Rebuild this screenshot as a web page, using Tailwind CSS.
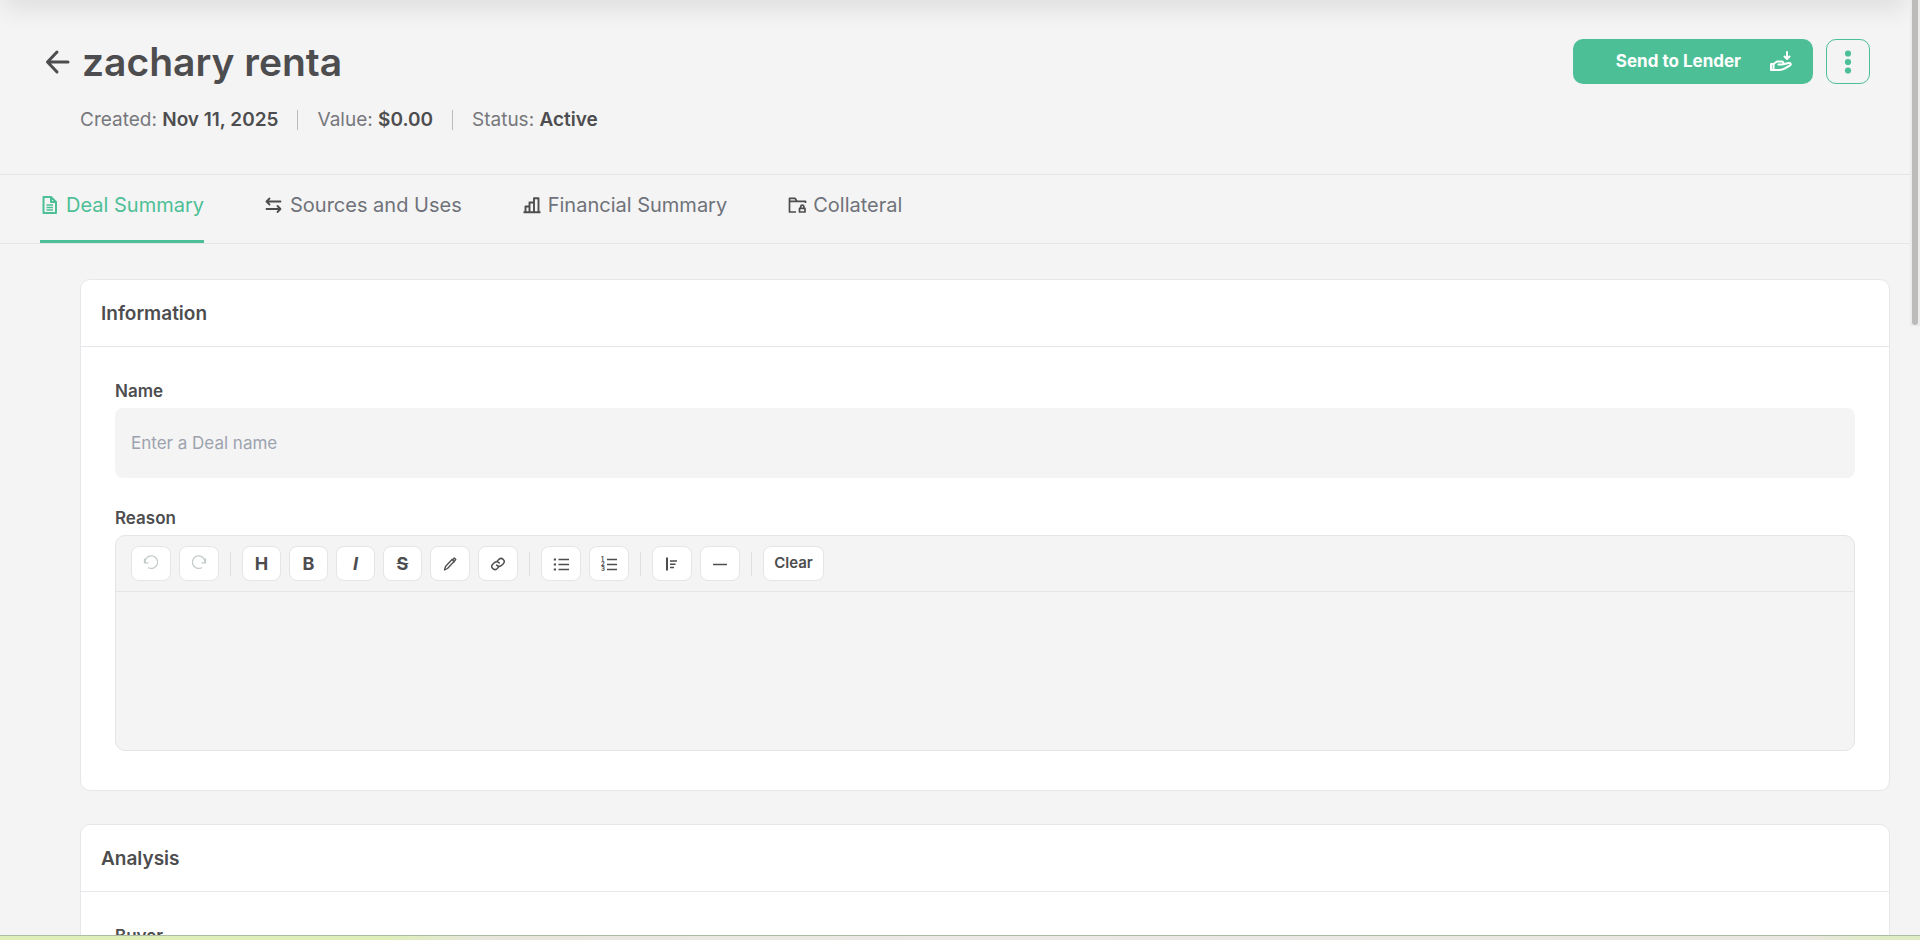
<!DOCTYPE html>
<html lang="en">

<head>
    <meta charset="UTF-8">
    <meta name="viewport" content="width=device-width, initial-scale=1.0">
    <title>zachary renta - Deal Summary</title>
    <script src="https://cdn.jsdelivr.net/npm/@tailwindcss/browser@4"></script>
</head>

<body class="h-screen flex flex-col overflow-hidden bg-[#f4f4f4] font-['Inter',sans-serif] text-[#4d4d4f]">
    <div class="relative flex-1 min-h-0 overflow-hidden pr-[10px]">
        <!-- Shadow of the bar above -->
        <div class="absolute left-2 right-[18px] -top-4 h-4 shadow-[0_4px_24px_4px_rgba(0,0,0,0.1)]"></div>
        <!-- Scroll thumb -->
        <div class="absolute right-0 top-0 w-[10px] h-[326px] bg-[#ebebeb] px-[2px]">
            <div class="h-[325px] bg-[#bcbbba] rounded-b-full"></div>
        </div>

        <!-- Deal header -->
        <header class="flex justify-between items-start h-[175px] pl-11 pr-10 pt-9 border-b border-[#e5e5e5]">
            <div>
                <div class="flex items-center gap-[10px] h-[52px]">
                    <a href="#" aria-label="Back">
                        <svg viewBox="0 0 28 28" fill="none" stroke="currentColor" stroke-width="3"
                            stroke-linecap="round" stroke-linejoin="round" class="w-7 h-7">
                            <path d="M24 14H4M13 4L3.500 14L13 24" />
                        </svg>
                    </a>
                    <h1 class="text-[39px] leading-[52px] font-semibold">zachary renta</h1>
                </div>
                <div class="flex items-center gap-[19px] mt-5 pl-9 text-[19px] leading-6 text-[#77787c]">
                    <p>Created: <b class="font-semibold text-[#4d4d4f]">Nov 11, 2025</b></p>
                    <span class="w-px h-5 bg-[#bcbcbc]"></span>
                    <p>Value: <b class="font-semibold text-[#4d4d4f]">$0.00</b></p>
                    <span class="w-px h-5 bg-[#bcbcbc]"></span>
                    <p>Status: <b class="font-semibold text-[#4d4d4f]">Active</b></p>
                </div>
            </div>
            <div class="flex gap-[13px] pt-[3px]">
                <button class="flex items-center justify-end gap-7 w-[240px] h-[45px] pr-5 rounded-[10px] bg-[#4dbf96] text-white text-[17px] font-bold">
                    Send to Lender
                    <svg viewBox="0 0 24 24" fill="none" stroke="currentColor" stroke-width="2"
                        stroke-linecap="round" stroke-linejoin="round" class="w-6 h-6">
                        <path d="M18 2v7M15.500 6.500l2.500 2.500l2.500-2.500" />
                        <path d="M2 14h2.500v6H2z" />
                        <path d="M4.500 14l3.500-2.500h4.500c2.500 0 2.500 3 0 3H9.500M13.500 14.500l6-1.500c2.500-.4 3 1.600 1.300 2.500C17 18 14 20 10 20H4.500" />
                    </svg>
                </button>
                <button aria-label="More actions" class="flex items-center justify-center w-11 h-[45px] rounded-[10px] border border-[#4dbf96] text-[#4dbf96]">
                    <svg viewBox="0 0 8 24" fill="currentColor" class="w-2 h-6">
                        <circle cx="4" cy="3.500" r="3.100" />
                        <circle cx="4" cy="12" r="3.100" />
                        <circle cx="4" cy="20.500" r="3.100" />
                    </svg>
                </button>
            </div>
        </header>

        <!-- Tabs -->
        <nav class="flex gap-[60px] h-[69px] px-10 border-b border-[#e5e5e5] text-[20px] leading-6 text-[#6f727a]">
            <a href="#" class="flex gap-[6px] pt-[18px] border-b-[3px] border-[#4dbf96] text-[#4dbf96]">
                <svg viewBox="0 0 20 24" fill="none" stroke="currentColor" stroke-width="2" stroke-linejoin="round" class="w-5 h-6">
                    <path d="M3.500 4h7.500l5 5v11H3.500zM11 4v5h5" />
                    <path stroke-width="1.500" d="M6.500 12h6.500M6.500 14.500h6.500M6.500 17h6.500" />
                </svg>
                Deal Summary
            </a>
            <a href="#" class="flex gap-[6px] pt-[18px]">
                <svg viewBox="0 0 20 24" fill="none" stroke="#4d4d4f" stroke-width="1.800" stroke-linecap="round" stroke-linejoin="round" class="w-5 h-6">
                    <path d="M16.500 8.500H3M5.500 5.500l-3 3l3 3M2.500 16H16M13.500 13l3 3l-3 3" />
                </svg>
                Sources and Uses
            </a>
            <a href="#" class="flex gap-[6px] pt-[18px]">
                <svg viewBox="0 0 20 24" fill="none" stroke="#4d4d4f" stroke-width="1.900" stroke-linejoin="round" class="w-5 h-6">
                    <path d="M1.500 19.300h17M3.500 19V13.500H7.500M7.500 19V9.500H12M12 19V5.200h4.500V19" />
                </svg>
                Financial Summary
            </a>
            <a href="#" class="flex gap-[6px] pt-[18px]">
                <svg viewBox="0 0 20 24" fill="none" stroke="#4d4d4f" stroke-width="1.700" stroke-linejoin="round" class="w-5 h-6">
                    <path d="M18.500 10V8.300H10L8 5.300H2.500V19H9M2.500 8.300H10" />
                    <path d="M12.500 15.300h5.500v3.700h-5.500zM13.700 15v-1.300a1.600 1.600 0 0 1 3.200 0V15" />
                </svg>
                Collateral
            </a>
        </nav>

        <!-- Cards -->
        <main class="flex flex-col gap-[33px] pt-[35px] pl-20 pr-5">
            <section class="bg-white border border-[#e5e7eb] rounded-[10px]">
                <h2 class="h-[67px] px-5 border-b border-[#e5e7eb] text-[19px] leading-[67px] font-semibold">Information</h2>
                <div class="px-[34px] pt-8 pb-[39px]">
                    <label for="name" class="block text-[17px] leading-6 font-semibold">Name</label>
                    <input id="name" type="text" placeholder="Enter a Deal name"
                        class="block w-full h-[70px] mt-[5px] px-4 rounded-lg bg-[#f4f4f4] text-[17px] placeholder:text-[#9ca3af]">
                    <label for="reason" class="block mt-7 text-[17px] leading-6 font-semibold">Reason</label>
                    <div class="mt-[5px] border border-[#e5e5e5] rounded-[10px] bg-[#f4f4f4]">
                        <div class="flex items-center gap-2 h-14 px-[15px] border-b border-[#e5e5e5] text-[18px] font-bold">
                            <button aria-label="Undo" disabled class="flex items-center justify-center w-10 h-[35px] bg-white border border-[#e5e5e5] rounded-lg text-[#c3cbcb]">
                                <svg viewBox="0 0 20 20" fill="none" stroke="currentColor" stroke-width="1.300" class="w-5 h-5">
                                    <path d="M4 8.500A6.300 6.300 0 1 1 7 13.500M3.500 4.500v4.300h4" />
                                </svg>
                            </button>
                            <button aria-label="Redo" disabled class="flex items-center justify-center w-10 h-[35px] bg-white border border-[#e5e5e5] rounded-lg text-[#c3cbcb]">
                                <svg viewBox="0 0 20 20" fill="none" stroke="currentColor" stroke-width="1.300" class="w-5 h-5">
                                    <path d="M16 8.500A6.300 6.300 0 1 0 13 13.500M16.500 4.500v4.300h-4" />
                                </svg>
                            </button>
                            <span class="w-px h-6 mx-[3px] bg-[#e0e0e0]"></span>
                            <button class="w-[39px] h-[35px] bg-white border border-[#e5e5e5] rounded-lg">H</button>
                            <button class="w-[39px] h-[35px] bg-white border border-[#e5e5e5] rounded-lg">B</button>
                            <button class="w-[39px] h-[35px] bg-white border border-[#e5e5e5] rounded-lg italic">I</button>
                            <button class="w-[39px] h-[35px] bg-white border border-[#e5e5e5] rounded-lg line-through">S</button>
                            <button aria-label="Highlight" class="flex items-center justify-center w-10 h-[35px] bg-white border border-[#e5e5e5] rounded-lg">
                                <svg viewBox="0 0 16 16" fill="none" stroke="currentColor" stroke-width="1.300" stroke-linejoin="round" class="w-4 h-4">
                                    <path d="M2.500 14l1-3.500L10 3.500l2 2L5.500 12.500zM9.500 3l3.200 3.200M11 3.500l1.300-1.500l1.500 1.500L12.500 5" />
                                </svg>
                            </button>
                            <button aria-label="Link" class="flex items-center justify-center w-10 h-[35px] bg-white border border-[#e5e5e5] rounded-lg">
                                <svg viewBox="0 0 24 24" fill="none" stroke="currentColor" stroke-width="2.200" stroke-linecap="round" class="w-4 h-4">
                                    <path d="M10 13.500a5 5 0 0 0 7.500.5l2.500-2.500a4.600 4.600 0 0 0-6.500-6.500L11 7.500" />
                                    <path d="M14 10.500a5 5 0 0 0-7.500-.5L4 12.500a4.600 4.600 0 0 0 6.500 6.500L13 16.500" />
                                </svg>
                            </button>
                            <span class="w-px h-6 mx-[3px] bg-[#e0e0e0]"></span>
                            <button aria-label="Bullet list" class="flex items-center justify-center w-10 h-[35px] bg-white border border-[#e5e5e5] rounded-lg">
                                <svg viewBox="0 0 16 16" fill="none" stroke="currentColor" stroke-width="1.500" class="w-4 h-4">
                                    <path d="M5.500 3.500H16M5.500 8.500H16M5.500 13.500H16" />
                                    <path stroke-width="2.200" d="M.8 3.500H3M.8 8.500H3M.8 13.500H3" />
                                </svg>
                            </button>
                            <button aria-label="Numbered list" class="flex items-center justify-center w-10 h-[35px] bg-white border border-[#e5e5e5] rounded-lg">
                                <svg viewBox="0 0 16 16" fill="none" stroke="currentColor" stroke-width="1.500" class="w-4 h-4">
                                    <path d="M6 3.500H16M6 8.500H16M6 13.500H16" />
                                    <g fill="currentColor" stroke="none" font-size="6">
                                        <text x="0" y="5">1</text>
                                        <text x="0" y="10">2</text>
                                        <text x="0" y="15">3</text>
                                    </g>
                                </svg>
                            </button>
                            <span class="w-px h-6 mx-[3px] bg-[#e0e0e0]"></span>
                            <button aria-label="Blockquote" class="flex items-center justify-center w-10 h-[35px] bg-white border border-[#e5e5e5] rounded-lg">
                                <svg viewBox="0 0 16 16" fill="none" stroke="currentColor" stroke-width="1.500" class="w-4 h-4">
                                    <path stroke-width="2" d="M3 1.500v13" />
                                    <path d="M6 5h7M6 8.200h5.500M6 11.500h4" />
                                </svg>
                            </button>
                            <button aria-label="Horizontal rule" class="flex items-center justify-center w-10 h-[35px] bg-white border border-[#e5e5e5] rounded-lg">
                                <svg viewBox="0 0 16 16" fill="none" stroke="currentColor" stroke-width="1.500" class="w-4 h-4">
                                    <path d="M1 8.500h14" />
                                </svg>
                            </button>
                            <span class="w-px h-6 mx-[3px] bg-[#e0e0e0]"></span>
                            <button class="w-[61px] h-[35px] bg-white border border-[#e5e5e5] rounded-lg text-[15px] font-semibold">Clear</button>
                        </div>
                        <textarea id="reason" class="block w-full h-[158px] px-4 py-3 resize-none bg-transparent"></textarea>
                    </div>
                </div>
            </section>

            <section class="bg-white border border-[#e5e7eb] rounded-[10px]">
                <h2 class="h-[67px] px-5 border-b border-[#e5e7eb] text-[19px] leading-[67px] font-semibold">Analysis</h2>
                <div class="px-[34px] pt-8 pb-[39px]">
                    <label for="buyer" class="block text-[17px] leading-6 font-semibold">Buyer</label>
                    <input id="buyer" type="text" class="block w-full h-[70px] mt-[5px] px-4 rounded-lg bg-[#f4f4f4] text-[17px]">
                </div>
            </section>
        </main>
    </div>

    <!-- Bottom strip -->
    <footer class="h-[5px] border-t border-[#b0bba4] bg-[linear-gradient(to_right,#deefb8_20%,#e6e6dc_25%,#ebe9e6_50%,#e9e6e0_94%,#e0ecc6_98%)]"></footer>
</body>

</html>
